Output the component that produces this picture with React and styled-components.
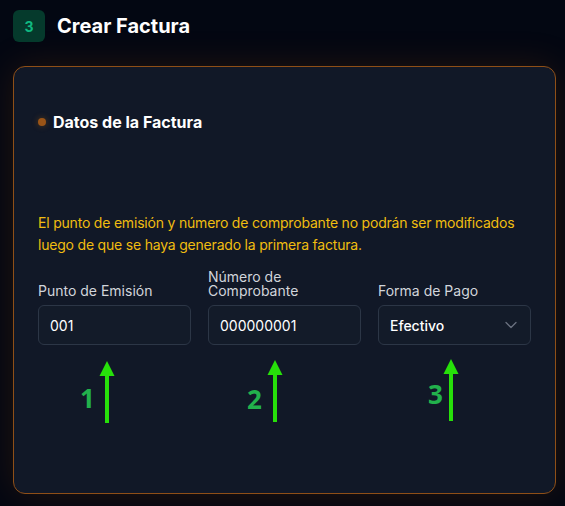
import { createGlobalStyle, styled } from "styled-components";
import { ChevronDown } from "lucide-react";

const GlobalStyle = createGlobalStyle`
  html, body {
    margin: 0;
    padding: 0;
    background: #030712;
  }
  body {
    font-family: Inter, "Noto Sans", "Liberation Sans", sans-serif;
    color: #f9fafb;
  }
`;

const Page = styled.div`
  box-sizing: border-box;
  width: 565px;
  height: 506px;
  padding: 10px 9px 0 13px;
  background: #030712;
  overflow: hidden;
`;

const Header = styled.div`
  display: flex;
  align-items: center;
  gap: 12px;
  height: 32px;
  margin-bottom: 24px;
`;

const StepBadge = styled.div`
  width: 32px;
  height: 32px;
  border-radius: 6px;
  background: #053a2c;
  color: #10b981;
  font-size: 14px;
  font-weight: 700;
  display: flex;
  align-items: center;
  justify-content: center;
`;

const HeaderTitle = styled.h2`
  margin: 0;
  font-size: 20px;
  font-weight: 700;
  color: #ffffff;
`;

const Card = styled.section`
  box-sizing: border-box;
  height: 428px;
  border: 1px solid #8f4f17;
  border-radius: 12px;
  background: #111827;
  box-shadow: 0 0 36px rgba(180, 83, 9, 0.18);
  padding: 43px 24px 24px;
`;

const SectionTitle = styled.div`
  display: flex;
  align-items: center;
  gap: 7px;
  height: 24px;
  font-size: 16px;
  font-weight: 700;
  color: #ffffff;
`;

const Dot = styled.span`
  width: 8px;
  height: 8px;
  border-radius: 50%;
  background: #9a5417;
  box-shadow: 0 0 6px rgba(217, 119, 6, 0.35);
`;

const Warning = styled.p`
  margin: 78px 0 14px;
  font-size: 14px;
  line-height: 22px;
  letter-spacing: -0.2px;
  color: #f0bd10;
`;

const FieldGrid = styled.div`
  display: grid;
  grid-template-columns: repeat(3, 1fr);
  column-gap: 17px;
  align-items: end;
`;

const Field = styled.label`
  display: flex;
  flex-direction: column;
  gap: 7px;
`;

const Label = styled.span`
  font-size: 14px;
  line-height: 14px;
  color: #d1d5db;
`;

const Input = styled.div`
  box-sizing: border-box;
  height: 40px;
  display: flex;
  align-items: center;
  justify-content: space-between;
  padding: 0 9px 0 11px;
  border: 1px solid #2c3646;
  border-radius: 6px;
  background: #131b29;
  font-size: 14px;
  font-weight: ${(p) => (p.$select ? 500 : 400)};
  color: #ffffff;

  svg {
    color: #6b7280;
  }
`;

const AnnotationRow = styled.div`
  display: grid;
  grid-template-columns: repeat(3, 1fr);
  column-gap: 17px;
  margin-top: 16px;
`;

const Annotation = styled.div`
  display: flex;
  align-items: flex-start;
  padding-left: ${(p) => p.$pad}px;
`;

const Num = styled.span`
  width: 15px;
  text-align: center;
  margin-top: ${(p) => p.$top}px;
  font-family: "Open Sans", "DejaVu Sans", sans-serif;
  font-size: 26px;
  font-weight: 700;
  line-height: 1;
  color: #22b14c;
`;

const ArrowSvg = styled.svg`
  margin-left: ${(p) => p.$gap}px;
  margin-top: ${(p) => p.$top}px;
`;

const Arrow = ({ gap, top }) => (
  <ArrowSvg $gap={gap} $top={top} width="16" height="62" viewBox="0 0 16 62">
    <polygon points="0.5,15 8,0 15.5,15" fill="#27e00a" />
    <rect x="6" y="14" width="4" height="48" fill="#27e00a" />
  </ArrowSvg>
);

const fields = [
  { label: "Punto de Emisión", value: "001" },
  { label: "Número de Comprobante", value: "000000001" },
  { label: "Forma de Pago", value: "Efectivo", select: true },
];

const annotations = [
  { n: "1", pad: 42, numTop: 24, gap: 4, arrowTop: 0 },
  { n: "2", pad: 39, numTop: 25, gap: 5, arrowTop: -1 },
  { n: "3", pad: 50, numTop: 20, gap: 0, arrowTop: -2 },
];

export default function App() {
  return (
    <Page>
      <GlobalStyle />
      <Header>
        <StepBadge>3</StepBadge>
        <HeaderTitle>Crear Factura</HeaderTitle>
      </Header>
      <Card>
        <SectionTitle>
          <Dot />
          Datos de la Factura
        </SectionTitle>
        <Warning>
          El punto de emisión y número de comprobante no podrán ser modificados
          luego de que se haya generado la primera factura.
        </Warning>
        <FieldGrid>
          {fields.map((f) => (
            <Field key={f.label}>
              <Label>{f.label}</Label>
              <Input $select={f.select}>
                {f.value}
                {f.select && <ChevronDown size={20} strokeWidth={1.5} />}
              </Input>
            </Field>
          ))}
        </FieldGrid>
        <AnnotationRow>
          {annotations.map((a) => (
            <Annotation key={a.n} $pad={a.pad}>
              <Num $top={a.numTop}>{a.n}</Num>
              <Arrow gap={a.gap} top={a.arrowTop} />
            </Annotation>
          ))}
        </AnnotationRow>
      </Card>
    </Page>
  );
}
